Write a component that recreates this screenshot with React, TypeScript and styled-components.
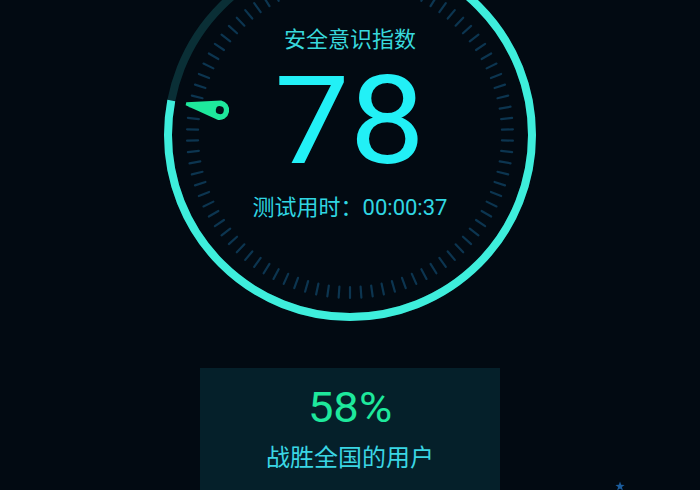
import React from "react";
import styled, { createGlobalStyle } from "styled-components";

const GlobalStyle = createGlobalStyle`
	html, body {
		margin: 0;
		padding: 0;
		background: #020a12;
		overflow: hidden;
	}
	body {
		font-family: Roboto, "Noto Sans CJK SC", sans-serif;
	}
`;

const SCORE = 78;
const BEAT = 58;
const DURATION = "00:00:37";

const RADIUS = 182;
const CIRC = 2 * Math.PI * RADIUS;
const TICKS = 90;

function Ticks() {
	const lines = [];
	for (let i = 0; i < TICKS; i++) {
		const a = (i / TICKS) * Math.PI * 2;
		const x1 = 200 + Math.sin(a) * 152;
		const y1 = 200 - Math.cos(a) * 152;
		const x2 = 200 + Math.sin(a) * 163;
		const y2 = 200 - Math.cos(a) * 163;
		lines.push(<line key={i} x1={x1} y1={y1} x2={x2} y2={y2} />);
	}
	return (
		<g stroke="#0c3550" strokeWidth={2.2} strokeLinecap="round">
			{lines}
		</g>
	);
}

function Dial({ score }: { score: number }) {
	const done = (score / 100) * CIRC;
	const angle = (score / 100) * 360 - 270;
	return (
		<DialSvg viewBox="0 0 400 400" width={400} height={400}>
			<Ticks />
			<circle cx={200} cy={200} r={RADIUS} fill="none" stroke="#0a2f36" strokeWidth={8} />
			<circle
				cx={200}
				cy={200}
				r={RADIUS}
				fill="none"
				stroke="#3eeedc"
				strokeWidth={8}
				strokeDasharray={`${done} ${CIRC}`}
				transform="rotate(-90 200 200)"
			/>
			<g transform={`rotate(${angle} 200 200)`}>
				<path d="M33 198.4 L33 201.6 L67 209.8 A9.8 9.8 0 1 0 67 190.2 Z" fill="#1ee89c" />
				<circle cx={67.5} cy={200} r={4} fill="#031018" />
			</g>
		</DialSvg>
	);
}

export default function App() {
	return (
		<>
			<GlobalStyle />
			<Page>
				<Gauge>
					<Dial score={SCORE} />
					<Readout>
						<Label>安全意识指数</Label>
						<Score>{SCORE}</Score>
						<Elapsed>测试用时：{DURATION}</Elapsed>
					</Readout>
				</Gauge>
				<RankCard>
					<Percent>{BEAT}%</Percent>
					<RankText>战胜全国的用户</RankText>
				</RankCard>
				<Star viewBox="0 0 10 10" width={10} height={10}>
					<path d="M5 0.5 L6.2 3.8 L9.6 3.9 L6.9 6 L7.9 9.4 L5 7.4 L2.1 9.4 L3.1 6 L0.4 3.9 L3.8 3.8 Z" fill="#1b5c9c" />
				</Star>
			</Page>
		</>
	);
}

const Page = styled.div`
	position: relative;
	width: 700px;
	height: 490px;
	display: flex;
	flex-direction: column;
	align-items: center;
	overflow: hidden;
`;

const Gauge = styled.div`
	display: grid;
	width: 400px;
	height: 400px;
	margin-top: -65px;
	flex-shrink: 0;
	& > * {
		grid-area: 1 / 1;
	}
`;

const DialSvg = styled.svg`
	display: block;
`;

const Readout = styled.div`
	display: flex;
	flex-direction: column;
	align-items: center;
	padding-top: 92px;
`;

const Label = styled.div`
	font-size: 22px;
	line-height: 26px;
	color: #38d8dc;
`;

const Score = styled.div`
	font-size: 122px;
	line-height: 122px;
	margin-top: 8px;
	color: #22f0f6;
	transform: scaleX(1.1);
`;

const Elapsed = styled.div`
	font-size: 22px;
	line-height: 26px;
	margin-top: 12px;
	color: #30d6e2;
`;

const RankCard = styled.div`
	width: 300px;
	margin-top: 33px;
	flex-shrink: 0;
	height: 160px;
	background: #05202a;
	display: flex;
	flex-direction: column;
	align-items: center;
	padding-top: 19px;
	box-sizing: border-box;
`;

const Percent = styled.div`
	font-size: 42px;
	line-height: 42px;
	color: #1ee89c;
	transform: scaleX(1.08);
`;

const RankText = styled.div`
	font-size: 24px;
	line-height: 28px;
	margin-top: 15px;
	color: #3ad6e4;
`;

const Star = styled.svg`
	position: absolute;
	left: 615px;
	top: 481px;
`;
